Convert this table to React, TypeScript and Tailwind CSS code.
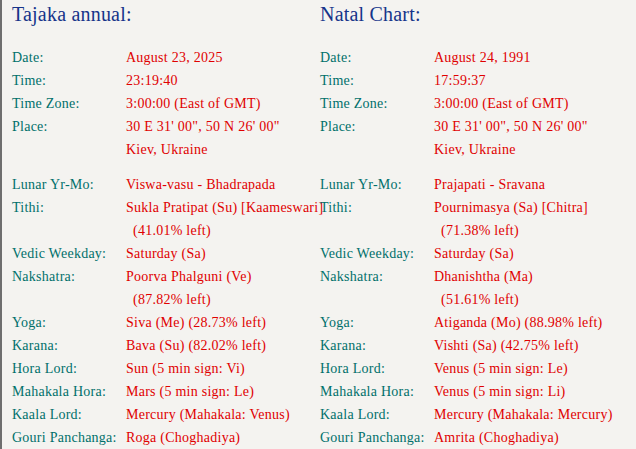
type Row = { label?: string; value: string; indent?: boolean };

type Chart = { title: string; top: Row[]; bottom: Row[] };

const charts: Chart[] = [
  {
    title: "Tajaka annual:",
    top: [
      { label: "Date:", value: "August 23, 2025" },
      { label: "Time:", value: "23:19:40" },
      { label: "Time Zone:", value: "3:00:00 (East of GMT)" },
      { label: "Place:", value: "30 E 31' 00\", 50 N 26' 00\"" },
      { value: "Kiev, Ukraine" },
    ],
    bottom: [
      { label: "Lunar Yr-Mo:", value: "Viswa-vasu - Bhadrapada" },
      { label: "Tithi:", value: "Sukla Pratipat (Su) [Kaameswari]" },
      { value: "(41.01% left)", indent: true },
      { label: "Vedic Weekday:", value: "Saturday (Sa)" },
      { label: "Nakshatra:", value: "Poorva Phalguni (Ve)" },
      { value: "(87.82% left)", indent: true },
      { label: "Yoga:", value: "Siva (Me) (28.73% left)" },
      { label: "Karana:", value: "Bava (Su) (82.02% left)" },
      { label: "Hora Lord:", value: "Sun (5 min sign: Vi)" },
      { label: "Mahakala Hora:", value: "Mars (5 min sign: Le)" },
      { label: "Kaala Lord:", value: "Mercury (Mahakala: Venus)" },
      { label: "Gouri Panchanga:", value: "Roga (Choghadiya)" },
    ],
  },
  {
    title: "Natal Chart:",
    top: [
      { label: "Date:", value: "August 24, 1991" },
      { label: "Time:", value: "17:59:37" },
      { label: "Time Zone:", value: "3:00:00 (East of GMT)" },
      { label: "Place:", value: "30 E 31' 00\", 50 N 26' 00\"" },
      { value: "Kiev, Ukraine" },
    ],
    bottom: [
      { label: "Lunar Yr-Mo:", value: "Prajapati - Sravana" },
      { label: "Tithi:", value: "Pournimasya (Sa) [Chitra]" },
      { value: "(71.38% left)", indent: true },
      { label: "Vedic Weekday:", value: "Saturday (Sa)" },
      { label: "Nakshatra:", value: "Dhanishtha (Ma)" },
      { value: "(51.61% left)", indent: true },
      { label: "Yoga:", value: "Atiganda (Mo) (88.98% left)" },
      { label: "Karana:", value: "Vishti (Sa) (42.75% left)" },
      { label: "Hora Lord:", value: "Venus (5 min sign: Le)" },
      { label: "Mahakala Hora:", value: "Venus (5 min sign: Li)" },
      { label: "Kaala Lord:", value: "Mercury (Mahakala: Mercury)" },
      { label: "Gouri Panchanga:", value: "Amrita (Choghadiya)" },
    ],
  },
];

function Rows({ rows }: { rows: Row[] }) {
  return (
    <div className="flex flex-col">
      {rows.map((r, i) => (
        <div key={i} className="flex h-[23px] leading-[23px] whitespace-nowrap">
          <div className="w-[114px] shrink-0 text-[#00706b]">{r.label}</div>
          <div className={`text-[#e00000] ${r.indent ? "pl-[7px]" : ""}`}>{r.value}</div>
        </div>
      ))}
    </div>
  );
}

export default function App() {
  return (
    <div className="w-[636px] h-[449px] overflow-hidden bg-[#f4f3f0] border-l-2 border-[#6e6e6e] pl-[10px] flex text-[14px] tracking-[0.25px] font-['Liberation_Serif']">
      {charts.map((c) => (
        <div key={c.title} className="w-[308px] shrink-0 flex flex-col">
          <h2 className="h-[28px] leading-[28px] text-[20px] tracking-[0.2px] text-[#16348a] whitespace-nowrap">{c.title}</h2>
          <div className="mt-[18px]">
            <Rows rows={c.top} />
          </div>
          <div className="mt-[12px]">
            <Rows rows={c.bottom} />
          </div>
        </div>
      ))}
    </div>
  );
}
